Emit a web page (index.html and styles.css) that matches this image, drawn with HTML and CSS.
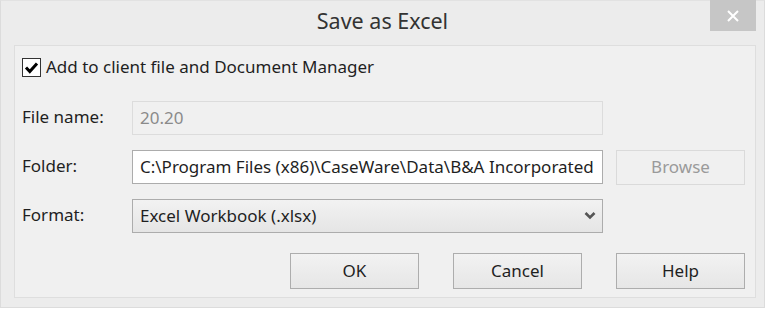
FILE: index.html
```html
<!DOCTYPE html>
<html>
<head>
<meta charset="utf-8">
<link rel="stylesheet" href="styles.css">
</head>
<body>
<div class="window">
  <div class="titlebar">
    <div class="spacer"></div>
    <div class="title">Save as Excel</div>
    <div class="tb-right">
      <div class="close">
        <svg width="14" height="14" viewBox="0 0 14 14"><path d="M2 2 L12 12 M12 2 L2 12" stroke="#fff" stroke-width="2" fill="none"/></svg>
      </div>
    </div>
  </div>
  <div class="panel">
    <label class="check-row">
      <span class="checkbox">
        <svg width="15" height="13" viewBox="0 0 15 13"><path d="M2 6.5 L5.8 10.5 L13 2.5" stroke="#000" stroke-width="3" fill="none"/></svg>
      </span>
      <span class="check-text">Add to client file and Document Manager</span>
    </label>
    <div class="form">
      <div class="label">File name:</div>
      <div class="field disabled">20.20</div>
      <div></div>
      <div class="label">Folder:</div>
      <div class="field">C:\Program Files (x86)\CaseWare\Data\B&amp;A Incorporated</div>
      <div class="btn btn-disabled">Browse</div>
      <div class="label">Format:</div>
      <div class="field select">
        <span>Excel Workbook (.xlsx)</span>
        <svg width="12" height="9" viewBox="0 0 12 9"><path d="M1.5 2 L6 6.5 L10.5 2" stroke="#555" stroke-width="2.6" fill="none"/></svg>
      </div>
      <div></div>
    </div>
    <div class="buttons">
      <div class="btn">OK</div>
      <div class="btn">Cancel</div>
      <div class="btn">Help</div>
    </div>
  </div>
</div>
</body>
</html>
```

FILE: styles.css
```css
html, body {
  margin: 0;
  padding: 0;
  background: #ffffff;
}
body {
  font-family: "Noto Sans", "Open Sans", sans-serif;
  font-size: 17px;
  color: #1f1f1f;
}
.window {
  box-sizing: border-box;
  width: 765px;
  height: 308px;
  background: #ececec;
  border: 1px solid #dcdcdc;
  border-top-color: #e2e2e2;
  display: flex;
  flex-direction: column;
}
.titlebar {
  height: 44px;
  display: grid;
  grid-template-columns: 1fr auto 1fr;
  align-items: start;
}
.title {
  font-size: 21.5px;
  color: #333;
  padding-top: 5px;
}
.tb-right {
  display: flex;
  justify-content: flex-end;
  padding-right: 8px;
}
.close {
  width: 46px;
  height: 31px;
  margin-top: -1px;
  background: #c6c6c6;
  display: flex;
  align-items: center;
  justify-content: center;
}
.panel {
  margin: 0 8px 9px 13px;
  flex: 1;
  background: #f0f0f0;
  border: 1px solid #dedede;
  padding: 11px 10px 0 7px;
}
.check-row {
  display: flex;
  align-items: center;
  gap: 5px;
  height: 20px;
}
.check-text {
  padding-bottom: 2px;
}
.checkbox {
  box-sizing: border-box;
  width: 19px;
  height: 19px;
  border: 1px solid #333;
  background: #fff;
  display: flex;
  align-items: center;
  justify-content: center;
}
.form {
  margin-top: 24px;
  display: grid;
  grid-template-columns: 97px 471px 129px;
  column-gap: 13px;
  row-gap: 15px;
  grid-auto-rows: 34px;
  align-items: center;
}
.label {
  color: #1f1f1f;
  padding-bottom: 3px;
}
.field {
  box-sizing: border-box;
  height: 34px;
  border: 1px solid #acacac;
  background: #fff;
  display: flex;
  align-items: center;
  padding: 0 7px 2px;
  white-space: nowrap;
  overflow: hidden;
}
.field.disabled {
  background: #f0f0f0;
  border-color: #dcdcdc;
  color: #8a8a8a;
}
.field.select {
  background: linear-gradient(#f2f2f2, #e5e5e5);
  justify-content: space-between;
  padding-right: 6px;
}
.btn {
  box-sizing: border-box;
  width: 129px;
  height: 35px;
  border: 1px solid #adadad;
  background: linear-gradient(#f2f2f2, #e6e6e6);
  display: flex;
  align-items: center;
  justify-content: center;
  padding-bottom: 2px;
}
.btn-disabled {
  background: #f0f0f0;
  border-color: #dadada;
  color: #9a9a9a;
}
.buttons {
  margin-top: 20px;
  display: flex;
  justify-content: flex-end;
  gap: 34px;
}
.buttons .btn {
  height: 36px;
}
```
